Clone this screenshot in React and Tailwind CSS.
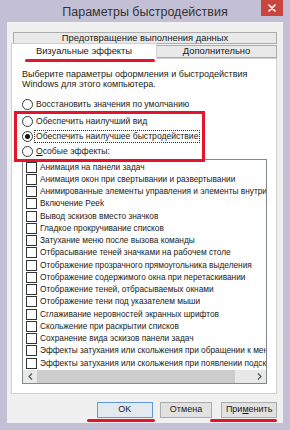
const items = [
  "Анимация на панели задач",
  "Анимация окон при свертывании и развертывании",
  "Анимированные элементы управления и элементы внутри окна",
  "Включение Peek",
  "Вывод эскизов вместо значков",
  "Гладкое прокручивание списков",
  "Затухание меню после вызова команды",
  "Отбрасывание теней значками на рабочем столе",
  "Отображение прозрачного прямоугольника выделения",
  "Отображение содержимого окна при перетаскивании",
  "Отображение теней, отбрасываемых окнами",
  "Отображение тени под указателем мыши",
  "Сглаживание неровностей экранных шрифтов",
  "Скольжение при раскрытии списков",
  "Сохранение вида эскизов панели задач",
  "Эффекты затухания или скольжения при обращении к меню",
  "Эффекты затухания или скольжения при появлении подсказок",
];

function Radio({ checked, children, focus }) {
  return (
    <div className="h-[15px] flex items-center gap-[2px]">
      <div className="w-[11px] h-[11px] rounded-full border border-[#3a3a3a] bg-white flex items-center justify-center shrink-0">
        {checked && <div className="w-[5px] h-[5px] rounded-full bg-[#111]" />}
      </div>
      <span
        className={
          "text-[8.6px] leading-[11px] text-[#1a1a1a] whitespace-nowrap px-[1px] " +
          (focus ? "outline outline-1 outline-dotted outline-[#333]" : "")
        }
      >
        {children}
      </span>
    </div>
  );
}

export default function App() {
  return (
    <div className="w-[290px] h-[430px] bg-[#c3c0d6] flex flex-col overflow-hidden font-['Liberation_Sans','Noto_Sans',sans-serif]">
      {/* title bar */}
      <div className="h-[22px] grid grid-cols-[1fr_auto_1fr] items-start shrink-0">
        <div />
        <div className="pt-[4px] text-[12.5px] leading-[16px] text-[#333] whitespace-nowrap">
          Параметры быстродействия
        </div>
        <div className="flex justify-end pr-[7px]">
          <div className="w-[22px] h-[16px] bg-[#c9453f] flex items-center justify-center">
            <svg width="8" height="8" viewBox="0 0 8 8">
              <path d="M1 1 L7 7 M7 1 L1 7" stroke="white" strokeWidth="1.6" strokeLinecap="round" />
            </svg>
          </div>
        </div>
      </div>

      {/* client area */}
      <div className="mx-[7px] h-[401px] bg-[#f0f0f0] pl-[4px] pr-[6px] pt-[10px] flex flex-col shrink-0">
        {/* top tab row */}
        <div className="ml-[2px] h-[12px] border border-[#acacac] bg-[#e9e9e9] flex items-center justify-center text-[9.4px] leading-[10px] text-[#1a1a1a] whitespace-nowrap">
          Предотвращение выполнения данных
        </div>
        {/* second tab row */}
        <div className="flex items-end h-[16px] -mt-[1px]">
          <div className="relative z-10 w-[146px] h-[16px] bg-white border-l border-t border-r border-[#d0d0d0] flex items-center justify-center text-[9.4px] text-[#1a1a1a] whitespace-nowrap">
            Визуальные эффекты
          </div>
          <div className="flex-1 h-[13px] mb-[1px] bg-[#e9e9e9] border border-[#acacac] border-l-0 flex items-center justify-center text-[9.4px] text-[#1a1a1a] whitespace-nowrap">
            Дополнительно
          </div>
        </div>
        {/* panel */}
        <div className="-mt-[1px] h-[336px] bg-white border border-[#d0d0d0] flex flex-col">
          <div className="ml-[13px] w-[130px] h-[2.5px] bg-[#e3142c] rounded-full" />
          <div className="ml-[10px] mt-[7px] text-[9px] leading-[10.5px] text-[#1a1a1a]">
            <div>Выберите параметры оформления и быстродействия</div>
            <div>Windows для этого компьютера.</div>
          </div>
          <div className="ml-[10px] mt-[7px]">
            <Radio>Восстановить значения по умолчанию</Radio>
          </div>
          <div className="relative z-10 -mt-[1px] ml-[2px] w-[191px] border-[3px] border-[#e3142c] pl-[5px]">
            <Radio>Обеспечить наилучший вид</Radio>
            <Radio checked focus>Обеспечить наилучшее быстродействие</Radio>
            <Radio>
              <span className="underline">О</span>собые эффекты:
            </Radio>
          </div>
          <div className="-mt-[2.5px] ml-[10px] w-[245px] h-[225px] border border-[#828790] flex flex-col bg-white">
            <div className="flex-1 pt-[1px] overflow-hidden">
              {items.map((t) => (
                <div key={t} className="h-[12.25px] flex items-center pl-[3px] gap-[3px] whitespace-nowrap overflow-hidden">
                  <div className="w-[11px] h-[11px] border border-[#333] bg-white shrink-0" />
                  <span className="text-[8.3px] leading-[11px] text-[#1a1a1a]">{t}</span>
                </div>
              ))}
            </div>
            <div className="h-[13px] bg-[#e8e8e8] flex items-center shrink-0">
              <div className="w-[14px] flex items-center justify-center">
                <svg width="5" height="7" viewBox="0 0 5 7">
                  <path d="M4 0.5 L1 3.5 L4 6.5" stroke="#555" strokeWidth="1.2" fill="none" />
                </svg>
              </div>
              <div className="w-[198px] h-[13px] bg-[#cdcdcd]" />
              <div className="flex-1" />
              <div className="w-[14px] flex items-center justify-center">
                <svg width="5" height="7" viewBox="0 0 5 7">
                  <path d="M1 0.5 L4 3.5 L1 6.5" stroke="#555" strokeWidth="1.2" fill="none" />
                </svg>
              </div>
            </div>
          </div>
        </div>
        {/* buttons */}
        <div className="mt-[8px] flex h-[16px]">
          <div className="ml-[86px] w-[56px] h-[16px] border border-[#5f9ad3] bg-[#e4e9ef] flex items-center justify-center text-[9px] text-[#1a1a1a]">
            OK
          </div>
          <div className="ml-[7px] w-[53px] h-[16px] border border-[#acacac] bg-[#e1e1e1] flex items-center justify-center text-[9px] text-[#1a1a1a]">
            Отмена
          </div>
          <div className="ml-[9px] w-[56px] h-[16px] border border-[#acacac] bg-[#e1e1e1] flex items-center justify-center text-[9px] text-[#1a1a1a]">
            При<span className="underline">м</span>енить
          </div>
        </div>
        <div className="flex h-[3px] mt-[1px]">
          <div className="ml-[76px] w-[71px] h-[2.5px] bg-[#e3142c] rounded-full" />
          <div className="ml-[55px] w-[69px] h-[2.5px] bg-[#e3142c] rounded-full" />
        </div>
      </div>
    </div>
  );
}
